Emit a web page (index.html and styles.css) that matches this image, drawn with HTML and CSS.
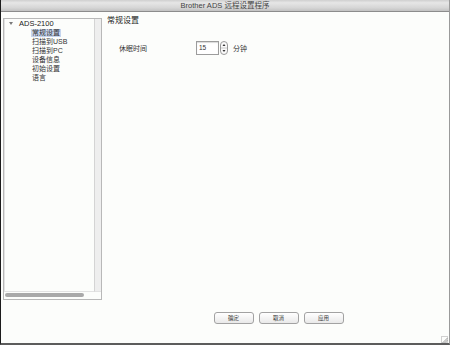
FILE: index.html
```html
<!DOCTYPE html>
<html lang="zh-CN">
<head>
    <meta charset="UTF-8">
    <title>Brother ADS 远程设置程序</title>
    <link rel="stylesheet" href="styles.css">
</head>
<body>
    <div class="window">
        <div class="titlebar">Brother ADS 远程设置程序</div>
        <div class="main">
            <div class="sidebar">
                <div class="tree">
                    <div class="node root"><span class="arrow"></span>ADS-2100</div>
                    <div class="node child"><span class="selected">常规设置</span></div>
                    <div class="node child"><span>扫描到USB</span></div>
                    <div class="node child"><span>扫描到PC</span></div>
                    <div class="node child"><span>设备信息</span></div>
                    <div class="node child"><span>初始设置</span></div>
                    <div class="node child"><span>语言</span></div>
                </div>
                <div class="vscroll"></div>
                <div class="hscroll"><div class="thumb"></div></div>
                <div class="corner"></div>
            </div>
            <div class="content">
                <h1 class="heading">常规设置</h1>
                <div class="field">
                    <label class="field-label">休眠时间</label>
                    <div class="number-box">15</div>
                    <svg class="stepper" width="8" height="14" viewBox="0 0 8 14">
                        <rect x="0.5" y="0.5" width="7" height="13" rx="3.5" fill="#fafafa" stroke="#9a9a9a"/>
                        <line x1="1" y1="7" x2="7" y2="7" stroke="#c8c8c8"/>
                        <path d="M2.5 5 L4 3 L5.5 5 Z" fill="#333"/>
                        <path d="M2.5 9 L4 11 L5.5 9 Z" fill="#333"/>
                    </svg>
                    <span class="unit">分钟</span>
                </div>
                <div class="buttons">
                    <button class="btn">确定</button>
                    <button class="btn">取消</button>
                    <button class="btn">应用</button>
                </div>
            </div>
        </div>
        <svg class="grip" width="7" height="7" viewBox="0 0 7 7">
            <rect x="0.5" y="0.5" width="6" height="6" fill="none" stroke="#d0d0d0"/>
            <line x1="2" y1="6.5" x2="6.5" y2="2" stroke="#9a9a9a"/>
            <line x1="4" y1="6.5" x2="6.5" y2="4" stroke="#9a9a9a"/>
        </svg>
    </div>
</body>
</html>
```
FILE: styles.css
```css
body {
    margin: 0;
    font-family: "Liberation Sans", "Noto Sans CJK SC", sans-serif;
    background: #fdfdfc;
    color: #222;
}
.window {
    position: relative;
    width: 450px;
    height: 345px;
    box-sizing: border-box;
    display: flex;
    flex-direction: column;
    background: #fcfdfb;
    border-left: 1px solid #1c1c1c;
    border-right: 1px solid #9a9a9a;
    border-bottom: 2px solid #5c5c5c;
}
.titlebar {
    height: 12px;
    line-height: 12px;
    box-sizing: border-box;
    font-size: 7.5px;
    color: #444;
    text-align: center;
    background: linear-gradient(#cfcfcf, #e6e6e6 25%, #d6d6d6 70%, #c2c2c2);
    border-bottom: 1px solid #8c8c8c;
}
.main {
    flex: 1;
    display: flex;
}
.sidebar {
    margin: 6px 0 0 2px;
    width: 99px;
    height: 282px;
    box-sizing: border-box;
    border: 1px solid #b8b8b8;
    display: grid;
    grid-template-columns: 1fr 7px;
    grid-template-rows: 1fr 7px;
}
.tree {
    border-left: 1px solid #e2e2e2;
    border-bottom: 1px solid #e2e2e2;
    font-size: 7px;
}
.node {
    height: 9px;
    line-height: 9px;
    white-space: nowrap;
}
.root {
    padding-left: 4px;
    font-size: 7.5px;
    color: #222;
}
.arrow {
    display: inline-block;
    width: 0;
    height: 0;
    border-left: 2px solid transparent;
    border-right: 2px solid transparent;
    border-top: 3px solid #7a7a7a;
    margin-right: 6px;
    vertical-align: 1px;
}
.child {
    padding-left: 26px;
    color: #333;
}
.child span {
    padding: 0 1px;
    display: inline-block;
    height: 8px;
    line-height: 8px;
}
.selected {
    background: #c6d5ee;
}
.vscroll {
    background: #eeeeee;
    border-left: 1px solid #d4d4d4;
    border-bottom: 1px solid #e2e2e2;
}
.hscroll {
    padding: 1px 10px 0 1px;
}
.thumb {
    height: 4px;
    border-radius: 2px;
    background: #a9a9a9;
}
.corner {
    background: #fcfdfb;
}
.content {
    flex: 1;
    display: flex;
    flex-direction: column;
    padding-left: 5px;
}
.heading {
    margin: 4px 0 0;
    font-size: 8px;
    line-height: 10px;
    font-weight: normal;
    color: #222;
}
.field {
    display: flex;
    align-items: center;
    margin: 15px 0 0 12px;
    font-size: 7px;
    color: #333;
}
.field-label {
    width: 77px;
}
.number-box {
    width: 23px;
    height: 14px;
    box-sizing: border-box;
    border: 1px solid #9c9c9c;
    box-shadow: inset 0 1px 1px rgba(0, 0, 0, 0.15);
    background: #fff;
    padding-left: 2px;
    line-height: 11px;
    font-size: 6.5px;
}
.stepper {
    margin-left: 1px;
}
.unit {
    margin-left: 5px;
}
.buttons {
    margin-top: auto;
    margin-bottom: 19px;
    display: flex;
    justify-content: center;
    gap: 5px;
    padding-left: 1px;
}
.btn {
    width: 40px;
    height: 12px;
    box-sizing: border-box;
    padding: 0;
    font-family: inherit;
    font-size: 5.5px;
    color: #333;
    border: 1px solid #a2a2a2;
    border-radius: 3px;
    background: linear-gradient(#ffffff, #e9e9e9);
}
.grip {
    position: absolute;
    right: 1px;
    bottom: 0;
}
```
